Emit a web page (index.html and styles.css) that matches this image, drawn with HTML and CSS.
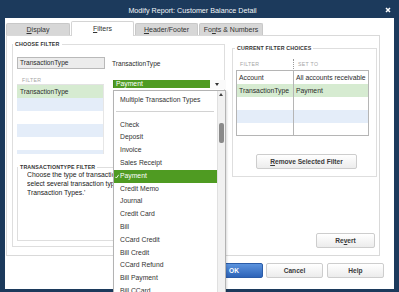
FILE: index.html
```html
<!DOCTYPE html>
<html lang="en">
  <head>
    <meta charset="UTF-8" />
    <title>Modify Report: Customer Balance Detail</title>
    <link rel="stylesheet" href="styles.css">
  </head>
  <body>
    <div class="dialog">
      <div class="titlebar">
        <span class="title">Modify Report: Customer Balance Detail</span>
        <svg class="close" width="6" height="6" viewBox="0 0 6 6">
          <path d="M1 1 L5 5 M5 1 L1 5" stroke="#fff" stroke-width="1.5" />
        </svg>
      </div>

      <div class="client">
        <div class="tabs">
          <div class="tab"><u>D</u>isplay</div>
          <div class="tab active"><u>F</u>ilters</div>
          <div class="tab"><u>H</u>eader/Footer</div>
          <div class="tab">Fo<u>n</u>ts &amp; Numbers</div>
        </div>

        <div class="panel">
          <div class="group choose">
            <div class="group-title">CHOOSE FILTER</div>
            <div class="choose-top">
              <div class="field">TransactionType</div>
              <span class="field-label">TransactionType</span>
            </div>
            <div class="list-head">FILTER</div>
            <div class="list">
              <div class="row green">TransactionType</div>
              <div class="row blue"></div>
              <div class="row"></div>
              <div class="row blue"></div>
              <div class="row"></div>
              <div class="row blue"></div>
            </div>
            <div class="group sub">
              <div class="group-title">TRANSACTIONTYPE FILTER</div>
              <p class="help-text">
                Choose the type of transaction you want to filter by, or<br />
                select several transaction types by choosing 'Multiple<br />
                Transaction Types.'
              </p>
            </div>
          </div>

          <div class="right">
            <div class="group current">
              <div class="group-title">CURRENT FILTER CHOICES</div>
              <div class="table-head">
                <span class="c1">FILTER</span>
                <span class="c2">SET TO</span>
              </div>
              <div class="table">
                <div class="trow"><span class="c1">Account</span><span class="c2">All accounts receivable</span></div>
                <div class="trow green"><span class="c1">TransactionType</span><span class="c2">Payment</span></div>
                <div class="trow"><span class="c1"></span><span class="c2"></span></div>
                <div class="trow blue"><span class="c1"></span><span class="c2"></span></div>
                <div class="trow"><span class="c1"></span><span class="c2"></span></div>
              </div>
              <button class="btn remove"><u>R</u>emove Selected Filter</button>
            </div>
            <button class="btn revert">Re<u>v</u>ert</button>
          </div>
        </div>

        <div class="actions">
          <button class="btn ok">OK</button>
          <button class="btn cancel">Cancel</button>
          <button class="btn help">Help</button>
        </div>
      </div>
    </div>

    <!-- open combo box menu, drawn over the dialog -->
    <div class="dropdown">
      <div class="dd-select">
        <div class="dd-value">Payment</div>
        <div class="dd-arrow"></div>
      </div>
      <div class="dd-list">
        <div class="dd-items">
          <div class="dd-item">Multiple Transaction Types</div>
          <div class="dd-sep"></div>
          <div class="dd-item">Check</div>
          <div class="dd-item">Deposit</div>
          <div class="dd-item">Invoice</div>
          <div class="dd-item">Sales Receipt</div>
          <div class="dd-item sel">
            <svg class="ck" width="4" height="5" viewBox="0 0 4 5">
              <path d="M0.3 2.8 L1.4 4 L3.7 0.8" stroke="#fff" stroke-width="0.9" fill="none" />
            </svg>
            Payment
          </div>
          <div class="dd-item">Credit Memo</div>
          <div class="dd-item">Journal</div>
          <div class="dd-item">Credit Card</div>
          <div class="dd-item">Bill</div>
          <div class="dd-item">CCard Credit</div>
          <div class="dd-item">Bill Credit</div>
          <div class="dd-item">CCard Refund</div>
          <div class="dd-item">Bill Payment</div>
          <div class="dd-item">Bill CCard</div>
        </div>
        <div class="dd-scroll">
          <div class="dd-up"></div>
          <div class="dd-thumb"></div>
        </div>
      </div>
    </div>
  </body>
</html>
```

FILE: styles.css
```css
* {
  box-sizing: border-box;
}
body {
  margin: 0;
  width: 399px;
  height: 292px;
  overflow: hidden;
  position: relative;
  background: #1c3a5c;
  font-family: 'Liberation Sans', Arial, sans-serif;
  font-size: 6.8px;
  color: #2b2b2b;
}
.dialog {
  display: flex;
  flex-direction: column;
  height: 292px;
  padding: 0 5px 3px 5px;
}
.titlebar {
  display: flex;
  align-items: center;
  height: 18px;
  margin: 0 -5px;
  padding-top: 2px;
}
.title {
  flex: 1;
  text-align: center;
  color: #f2f5f8;
  font-size: 7.2px;
}
.close {
  margin-right: 8px;
}
.client {
  flex: 1;
  display: flex;
  flex-direction: column;
  background: #fff;
}
.tabs {
  display: flex;
  align-items: flex-end;
  gap: 1px;
  height: 17px;
  padding-left: 1px;
}
.tab {
  width: 63px;
  height: 12px;
  line-height: 11px;
  text-align: center;
  font-size: 7px;
  color: #333;
  background: #d7d7d7;
  border: 1px solid #c8c8c8;
  border-bottom: none;
  border-radius: 2px 2px 0 0;
}
.tab:first-child,
.tab:last-child {
  width: 64px;
}
.tab.active {
  position: relative;
  z-index: 1;
  height: 15px;
  line-height: 14px;
  margin-bottom: -1px;
  background: #fff;
  border-color: #d4d4d4;
}
.panel {
  display: flex;
  align-items: flex-start;
  width: 374px;
  height: 221px;
  margin-left: 1px;
  padding: 8px 0 0 5px;
  border: 1px solid #d9d9d9;
}
.group {
  border: 1px solid #dedede;
}
.group-title {
  width: fit-content;
  margin: -4px 0 0 0;
  padding: 0 2px;
  height: 7px;
  line-height: 7px;
  background: #fff;
  font-size: 5.3px;
  font-weight: bold;
  letter-spacing: 0.15px;
  color: #333;
}
.choose {
  width: 213px;
  height: 203px;
  padding-left: 4px;
}
.choose > .group-title {
  margin-left: -4px;
}
.choose-top {
  display: flex;
  align-items: center;
  margin-top: 9px;
}
.field {
  width: 88px;
  height: 12px;
  line-height: 10px;
  padding-left: 2px;
  font-size: 6.6px;
  background: #ececec;
  border: 1px solid #b9b9b9;
}
.field-label {
  margin-left: 7px;
  font-size: 6.6px;
}
.list-head {
  width: 87px;
  height: 10px;
  line-height: 10px;
  margin-top: 6px;
  padding-left: 5px;
  font-size: 5.2px;
  letter-spacing: 0.3px;
  color: #a6a6a6;
  border-bottom: 1px solid #e3e3e3;
}
.list {
  width: 87px;
  height: 69px;
  overflow: hidden;
  border-right: 1px solid #e6e6e6;
}
.row {
  height: 13px;
  line-height: 13px;
  padding-left: 3px;
  font-size: 6.6px;
}
.green {
  background: #d6ebd1;
}
.blue {
  background: #e4edf9;
}
.sub {
  width: 205px;
  height: 74px;
  margin-top: 13px;
}
/* the open combo box covers the rest of these lines */
.help-text {
  width: 86px;
  margin: -1px 0 0 9px;
  line-height: 9px;
  white-space: nowrap;
  overflow: hidden;
  color: #1a1a1a;
}
.right {
  display: flex;
  flex-direction: column;
  width: 145px;
  margin: 4px 0 0 7px;
}
.current {
  height: 129px;
  padding-left: 3px;
}
.current > .group-title {
  margin-left: -1px;
}
.table-head {
  display: flex;
  height: 10px;
  line-height: 10px;
  margin-top: 7px;
  font-size: 5.2px;
  letter-spacing: 0.3px;
  color: #a6a6a6;
}
.table-head .c1 {
  width: 57px;
  padding-left: 4px;
}
.table-head .c2 {
  padding-left: 4px;
  border-left: 1px dotted #9a9a9a;
}
.table {
  width: 133px;
  height: 66px;
  margin-top: 1px;
  border: 1px solid #b5b5b5;
  overflow: hidden;
}
.trow {
  display: flex;
  height: 13px;
  line-height: 13px;
}
.trow .c1 {
  width: 57px;
  padding-left: 2px;
  border-right: 1px solid #b5b5b5;
}
.trow .c2 {
  flex: 1;
  padding-left: 2px;
  white-space: nowrap;
}
.btn {
  display: block;
  height: 15px;
  padding: 0;
  font-family: inherit;
  font-size: 6.6px;
  font-weight: bold;
  color: #3a3a3a;
  background: linear-gradient(#ffffff, #ececec);
  border: 1px solid #cdcdcd;
  border-radius: 2px;
}
.remove {
  width: 101px;
  margin: 18px 0 0 20px;
}
.revert {
  align-self: flex-end;
  width: 59px;
  margin: 56px 2px 0 0;
}
.actions {
  display: flex;
  justify-content: flex-end;
  margin-top: 7px;
  padding-right: 10px;
}
.ok {
  width: 58px;
  color: #fff;
  background: linear-gradient(#5b93de, #2e64b8);
  border-color: #2b5ca8;
}
.cancel {
  width: 57px;
  margin-left: 3px;
}
.help {
  width: 57px;
  margin-left: 4px;
}
.dropdown {
  position: absolute;
  left: 113px;
  top: 80px;
  width: 113px;
}
.dd-select {
  display: flex;
  height: 9px;
}
.dd-value {
  width: 97px;
  height: 8px;
  line-height: 8px;
  padding-left: 2px;
  color: #fff;
  background: #4f9b22;
  border: 1px solid #438a1b;
  border-width: 0 0 0 1px;
}
.dd-arrow {
  position: relative;
  flex: 1;
  background: #fafafa;
}
.dd-arrow::after {
  content: '';
  position: absolute;
  left: 5px;
  top: 3px;
  border-left: 2.5px solid transparent;
  border-right: 2.5px solid transparent;
  border-top: 3px solid #333;
}
.dd-list {
  display: flex;
  height: 212px;
  margin-top: 1px;
  background: #fff;
  border: 1px solid #b3b3b3;
  box-shadow: 1px 1px 2px rgba(0, 0, 0, 0.15);
}
.dd-items {
  flex: 1;
  padding-top: 2.6px;
}
.dd-item {
  position: relative;
  height: 12.8px;
  line-height: 12.8px;
  padding-left: 6px;
  white-space: nowrap;
  color: #333;
}
.dd-item.sel {
  color: #fff;
  background: #4f9b22;
}
.ck {
  position: absolute;
  left: 1px;
  top: 4px;
}
.dd-sep {
  height: 1px;
  margin: 5.1px 3px 6.1px 2px;
  background: #d2d2d2;
}
.dd-scroll {
  position: relative;
  width: 8px;
  background: #f1f1f1;
  border-left: 1px solid #e0e0e0;
}
.dd-up {
  position: absolute;
  left: 1px;
  top: 2px;
  border-left: 2.5px solid transparent;
  border-right: 2.5px solid transparent;
  border-bottom: 3px solid #444;
}
.dd-thumb {
  position: absolute;
  left: 1px;
  top: 32px;
  width: 5px;
  height: 20px;
  background: #8a8a8a;
  border-radius: 2px;
}
```
